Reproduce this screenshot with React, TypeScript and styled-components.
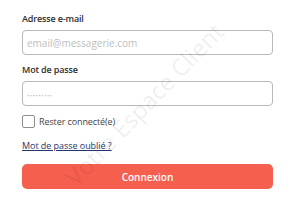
import React from 'react';
import styled, { createGlobalStyle } from 'styled-components';

const GlobalStyle = createGlobalStyle`
  html, body {
    margin: 0;
    padding: 0;
    background: #fff;
  }
  body {
    font-family: "Open Sans", "Noto Sans", sans-serif;
  }
`;

const Page = styled.div`
  position: relative;
  width: 300px;
  height: 210px;
  overflow: hidden;
`;

const Form = styled.form`
  display: flex;
  flex-direction: column;
  width: 251px;
  padding: 13px 0 0 22px;
`;

const Label = styled.label<{ $first?: boolean }>`
  font-size: 9px;
  font-weight: 600;
  letter-spacing: -0.15px;
  color: #2e2e2e;
  line-height: 12px;
  margin: ${({ $first }) => ($first ? '0' : '9px')} 0 5px;
`;

const Input = styled.input<{ $dots?: boolean }>`
  box-sizing: border-box;
  height: 25px;
  width: 100%;
  border: 1px solid #b9b9b9;
  border-radius: 4px;
  padding: 0 4px;
  font-family: inherit;
  font-size: 10px;
  color: #333;
  outline: none;

  &::placeholder {
    color: #bdbdbd;
    font-size: ${({ $dots }) => ($dots ? '6px' : '10px')};
    letter-spacing: ${({ $dots }) => ($dots ? '0.6px' : '0')};
  }
`;

const CheckRow = styled.label`
  display: flex;
  align-items: center;
  gap: 4px;
  margin-top: 9px;
  font-size: 9px;
  letter-spacing: -0.1px;
  color: #444;
  line-height: 13px;
`;

const Box = styled.span`
  box-sizing: border-box;
  width: 13px;
  height: 13px;
  border: 1px solid #8f8f8f;
  border-radius: 2px;
`;

const Link = styled.a`
  margin-top: 11px;
  font-size: 9px;
  letter-spacing: -0.05px;
  color: #23376b;
  text-decoration: underline;
  line-height: 13px;
  align-self: flex-start;
`;

const Button = styled.button`
  margin-top: 12px;
  height: 25px;
  width: 100%;
  border: none;
  border-radius: 5px;
  background: #f55f4e;
  color: #fff;
  font-family: inherit;
  font-size: 10px;
  font-weight: 600;
`;

const Watermark = styled.div`
  position: absolute;
  left: 144px;
  top: 104px;
  transform: translate(-50%, -50%) rotate(-46deg);
  font-size: 24px;
  color: rgba(0, 0, 0, 0.08);
  white-space: nowrap;
  pointer-events: none;
`;

export default function App() {
  return (
    <>
      <GlobalStyle />
      <Page>
        <Form onSubmit={(e) => e.preventDefault()}>
          <Label $first>Adresse e-mail</Label>
          <Input placeholder="email@messagerie.com" />
          <Label>Mot de passe</Label>
          <Input $dots placeholder="•••••••••" />
          <CheckRow>
            <Box />
            Rester connecté(e)
          </CheckRow>
          <Link href="#">Mot de passe oublié ?</Link>
          <Button type="submit">Connexion</Button>
        </Form>
        <Watermark>Votre Espace Client</Watermark>
      </Page>
    </>
  );
}
